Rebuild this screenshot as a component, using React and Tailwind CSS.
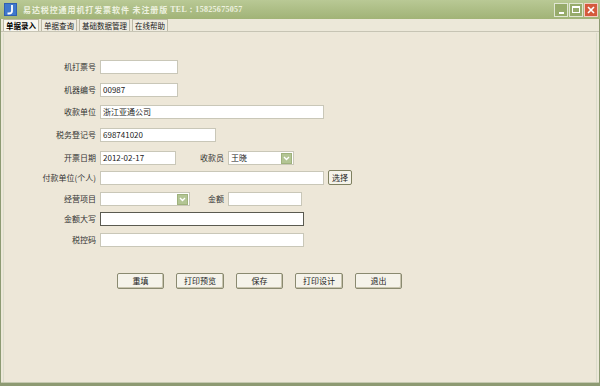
const font = { fontFamily: '"Noto Sans CJK SC", "Liberation Sans", sans-serif' };

function TextBox({ w, value, dark }) {
  return (
    <div
      className={`h-[14px] ${w} bg-white flex items-center px-[2px] text-[8px] leading-none text-[#222] ${
        dark ? 'border border-[#5a5a50]' : 'border border-[#c9c7b8]'
      }`}
    >
      {value}
    </div>
  );
}

function Combo({ w, value }) {
  return (
    <div className={`h-[14px] ${w} bg-white border border-[#c9c7b8] flex items-center`}>
      <span className="flex-1 px-[2px] text-[8px] leading-none text-[#222]">{value}</span>
      <span className="w-[11px] h-[11px] mr-[1px] bg-[#b3c594] border border-[#9fb27c] flex items-center justify-center">
        <svg width="7" height="5" viewBox="0 0 7 5">
          <path d="M1 1 L3.5 3.5 L6 1" fill="none" stroke="#fff" strokeWidth="1.4" />
        </svg>
      </span>
    </div>
  );
}

function Label({ children, w = 'w-[96px]' }) {
  return <div className={`${w} text-right pr-[4px] text-[8px] leading-none text-[#333]`}>{children}</div>;
}

function Btn({ children, w = 'w-[47px]' }) {
  return (
    <div className={`${w} h-[16px] border border-[#8a8a70] bg-[#f5f3ea] rounded-[2px] flex items-center justify-center text-[8px] text-[#222] shadow-[inset_-1px_-1px_0_#c8c4ae]`}>
      {children}
    </div>
  );
}

function WinBtn({ children, red }) {
  return (
    <div
      className={`w-[14px] h-[14px] border border-white/70 flex items-center justify-center ${
        red ? 'bg-[#d45a3c]' : 'bg-[#97ab6b]'
      }`}
    >
      {children}
    </div>
  );
}

export default function App() {
  const tabs = ['单据录入', '单据查询', '基础数据管理', '在线帮助'];
  return (
    <div className="w-[600px] h-[386px] bg-[#8d9a72] flex flex-col overflow-hidden" style={font}>
      {/* title bar */}
      <div className="h-[19px] bg-gradient-to-b from-[#b9c995] to-[#a1b377] flex items-center pl-[4px] pr-[2px]">
        <svg width="13" height="13" viewBox="0 0 13 13">
          <rect x="0" y="0" width="13" height="13" fill="#2f5fb3" />
          <rect x="1" y="1" width="11" height="11" fill="#3f78cc" />
          <path d="M8 2 L8 8 Q8 10.5 5 10.5 L3.5 10.5" fill="none" stroke="#fff" strokeWidth="1.8" />
        </svg>
        <span className="ml-[6px] text-[8px] font-bold text-[#eef2e0] tracking-[0.9px]">易达税控通用机打发票软件 未注册版</span>
        <span
          className="ml-[2px] text-[8px] font-bold text-[#eef2e0] tracking-[0.3px]"
          style={{ fontFamily: '"Liberation Serif", serif' }}
        >
          TEL：15825675057
        </span>
        <div className="ml-auto flex gap-[1px]">
          <WinBtn>
            <span className="w-[5px] h-[2px] bg-white mt-[6px]" />
          </WinBtn>
          <WinBtn>
            <span className="w-[8px] h-[7px] border border-white border-t-2" />
          </WinBtn>
          <WinBtn red>
            <svg width="8" height="8" viewBox="0 0 8 8">
              <path d="M1 1 L7 7 M7 1 L1 7" stroke="#fff" strokeWidth="1.6" />
            </svg>
          </WinBtn>
        </div>
      </div>

      {/* body */}
      <div className="flex-1 bg-[#ece8d9] flex flex-col mx-[1px] mb-[3px] border-b border-[#c5c9b0]">
        <div className="h-[13px] flex items-end pl-[2px] gap-[2px] border-b border-[#c7c4b4]">
          {tabs.map((t, i) => (
            <div
              key={t}
              className={`h-[12px] px-[2px] flex items-center text-[7.5px] leading-none border border-b-0 border-[#bdb9a6] ${
                i === 0 ? 'bg-[#f8f6ee] text-black font-bold' : 'bg-[#efece0] text-[#222]'
              }`}
            >
              {t}
            </div>
          ))}
        </div>

        <div className="flex-1 mx-[2px] mt-[1px] border-x border-[#dcdccb] bg-[#ede7d8] flex flex-col">
          <div className="flex items-center mt-[27px]">
            <Label>机打票号</Label>
            <TextBox w="w-[78px]" />
          </div>
          <div className="flex items-center mt-[9px]">
            <Label>机器编号</Label>
            <TextBox w="w-[78px]" value="00987" />
          </div>
          <div className="flex items-center mt-[8px]">
            <Label>收款单位</Label>
            <TextBox w="w-[224px]" value="浙江亚通公司" />
          </div>
          <div className="flex items-center mt-[9px]">
            <Label>税务登记号</Label>
            <TextBox w="w-[116px]" value="698741020" />
          </div>
          <div className="flex items-center mt-[9px]">
            <Label>开票日期</Label>
            <TextBox w="w-[76px]" value="2012-02-17" />
            <Label w="w-[52px]">收款员</Label>
            <Combo w="w-[66px]" value="王晓" />
          </div>
          <div className="flex items-center mt-[5px]">
            <Label>付款单位(个人)</Label>
            <TextBox w="w-[224px]" />
            <div className="ml-[4px] w-[24px] h-[15px] border border-[#7f8060] bg-[#f5f3ea] rounded-[2px] flex items-center justify-center text-[8px] text-[#222]">
              选择
            </div>
          </div>
          <div className="flex items-center mt-[7px]">
            <Label>经营项目</Label>
            <Combo w="w-[90px]" />
            <Label w="w-[38px]">金额</Label>
            <TextBox w="w-[74px]" />
          </div>
          <div className="flex items-center mt-[6px]">
            <Label>金额大写</Label>
            <TextBox w="w-[204px]" dark />
          </div>
          <div className="flex items-center mt-[7px]">
            <Label>税控码</Label>
            <TextBox w="w-[204px]" />
          </div>

          <div className="flex items-center mt-[26px] pl-[113px] gap-[12px]">
            <Btn>重填</Btn>
            <Btn w="w-[48px]">打印预览</Btn>
            <Btn>保存</Btn>
            <Btn w="w-[48px]">打印设计</Btn>
            <Btn>退出</Btn>
          </div>
        </div>
      </div>
    </div>
  );
}
